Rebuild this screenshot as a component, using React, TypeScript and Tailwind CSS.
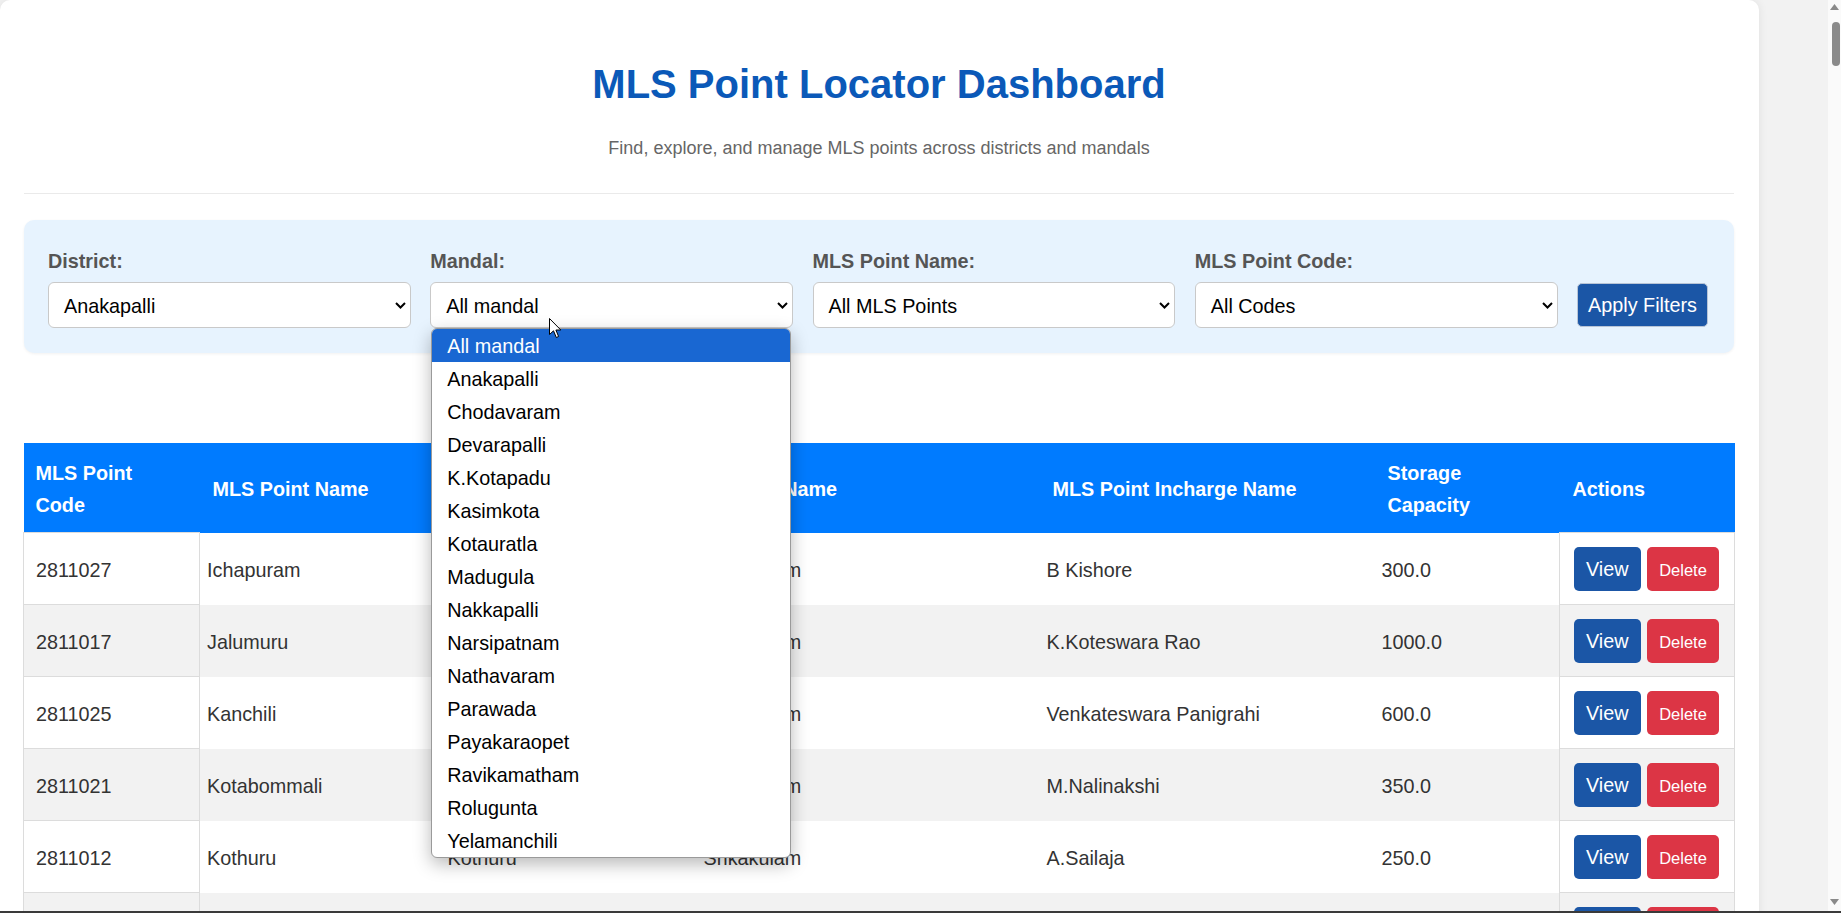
import React from "react";

const mandals = [
  "All mandal",
  "Anakapalli",
  "Chodavaram",
  "Devarapalli",
  "K.Kotapadu",
  "Kasimkota",
  "Kotauratla",
  "Madugula",
  "Nakkapalli",
  "Narsipatnam",
  "Nathavaram",
  "Parawada",
  "Payakaraopet",
  "Ravikamatham",
  "Rolugunta",
  "Yelamanchili",
];

const points = [
  { code: "2811027", name: "Ichapuram", mandal: "Ichapuram", district: "Srikakulam", incharge: "B Kishore", capacity: "300.0" },
  { code: "2811017", name: "Jalumuru", mandal: "Jalumuru", district: "Srikakulam", incharge: "K.Koteswara Rao", capacity: "1000.0" },
  { code: "2811025", name: "Kanchili", mandal: "Kanchili", district: "Srikakulam", incharge: "Venkateswara Panigrahi", capacity: "600.0" },
  { code: "2811021", name: "Kotabommali", mandal: "Kotabommali", district: "Srikakulam", incharge: "M.Nalinakshi", capacity: "350.0" },
  { code: "2811012", name: "Kothuru", mandal: "Kothuru", district: "Srikakulam", incharge: "A.Sailaja", capacity: "250.0" },
  { code: "2811019", name: "Mandasa", mandal: "Mandasa", district: "Srikakulam", incharge: "P.Ramesh", capacity: "400.0" },
];

function Chevron() {
  return (
    <svg width="11" height="7" viewBox="0 0 11 7" className="shrink-0">
      <polyline points="1,1 5.5,5.5 10,1" fill="none" stroke="#000" strokeWidth="2" />
    </svg>
  );
}

function SelectBox({ value }: { value: string }) {
  return (
    <div className="h-[46px] bg-white border border-[#c9c9c9] rounded-[6px] flex items-center justify-between pl-[15px] pr-[4px] text-[19.8px] text-black">
      <span className="pt-[3px]">{value}</span>
      <Chevron />
    </div>
  );
}

function Field({ label, value, children }: { label: string; value: string; children?: React.ReactNode }) {
  return (
    <div className="w-[363px] flex flex-col relative">
      <label className="text-[19.8px] leading-[24px] font-bold text-[#555]">{label}</label>
      <div className="mt-[9px] relative">
        <SelectBox value={value} />
        {children}
      </div>
    </div>
  );
}

export default function App() {
  return (
    <div className="relative h-screen w-full overflow-hidden flex flex-col bg-[#f2f2f2] font-['Liberation_Sans',Arial,sans-serif]">
      <div className="flex flex-1 min-h-0">
        <div className="flex-1 min-w-0 overflow-hidden">
          <div className="w-[1759px] bg-white rounded-[10px] shadow-[0_0_10px_rgba(0,0,0,0.08)] pl-[24px] pr-[25px] pt-[61px] pb-[40px]">
            {/* Header */}
            <h1 className="text-center text-[40px] leading-[46px] font-bold text-[#0b59b8]">MLS Point Locator Dashboard</h1>
            <p className="mt-[29px] text-center text-[18px] leading-[24px] text-[#666]">
              Find, explore, and manage MLS points across districts and mandals
            </p>
            <div className="mt-[33px] h-px bg-[#eaeaea]" />

            {/* Filters */}
            <div className="mt-[26px] rounded-[10px] bg-[#e7f3fe] shadow-[0_1px_3px_rgba(0,0,0,0.06)] pt-[29px] pb-[25px] pl-[24px] pr-[26px] flex items-end gap-[19.5px]">
              <Field label="District:" value="Anakapalli" />
              <Field label="Mandal:" value="All mandal">
                <div className="absolute z-20 top-[46px] left-[1px] w-[360px] bg-white border border-[#9a9a9a] rounded-[6px] overflow-hidden shadow-[0_6px_18px_rgba(0,0,0,0.28)]">
                  {mandals.map((m, i) => (
                    <div
                      key={m}
                      className={`h-[33px] pl-[15px] pt-[2px] flex items-center text-[19.8px] ${
                        i === 0 ? "bg-[#1967d2] text-white" : "text-black"
                      }`}
                    >
                      {m}
                    </div>
                  ))}
                </div>
              </Field>
              <Field label="MLS Point Name:" value="All MLS Points" />
              <Field label="MLS Point Code:" value="All Codes" />
              <button className="mb-[1px] h-[44px] w-[131px] pt-[2px] rounded-[5px] border border-[#b8c4d6] bg-[#1b56a6] text-white text-[19.8px]">
                Apply Filters
              </button>
            </div>

            {/* Table */}
            <table className="mt-[90px] -ml-[1px] w-[1711px] table-fixed border-collapse">
              <colgroup>
                <col className="w-[176px]" />
                <col className="w-[241px]" />
                <col className="w-[256px]" />
                <col className="w-[343px]" />
                <col className="w-[335px]" />
                <col className="w-[185px]" />
                <col className="w-[175px]" />
              </colgroup>
              <thead>
                <tr className="bg-[#007bff] text-white text-[19.8px] leading-[1.6] font-bold text-left">
                  <th className="px-[12px] pt-[15px] pb-[11px] align-middle">MLS Point<br />Code</th>
                  <th className="px-[13px] pt-[15px] pb-[11px] align-middle">MLS Point Name</th>
                  <th className="px-[13px] pt-[15px] pb-[11px] align-middle">Mandal Name</th>
                  <th className="px-[13px] pt-[15px] pb-[11px] align-middle">District Name</th>
                  <th className="px-[13px] pt-[15px] pb-[11px] align-middle">MLS Point Incharge Name</th>
                  <th className="px-[13px] pt-[15px] pb-[11px] align-middle">Storage<br />Capacity</th>
                  <th className="px-[13px] pt-[15px] pb-[11px] align-middle">Actions</th>
                </tr>
              </thead>
              <tbody>
                {points.map((p, i) => (
                  <tr key={p.code} className={`${i % 2 === 1 ? "bg-[#f2f2f2]" : "bg-white"} text-[19.8px] leading-[1.6] text-[#333]`}>
                    <td className="h-[72px] pl-[12px] pt-[3px] align-middle border border-[#dcdcdc]">{p.code}</td>
                    <td className="pl-[7px] pt-[3px] align-middle">{p.name}</td>
                    <td className="pl-[7px] pt-[3px] align-middle">{p.mandal}</td>
                    <td className="pl-[7px] pt-[3px] align-middle">{p.district}</td>
                    <td className="pl-[7px] pt-[3px] align-middle">{p.incharge}</td>
                    <td className="pl-[7px] pt-[3px] align-middle">{p.capacity}</td>
                    <td className="pl-[14px] align-middle border border-[#dcdcdc]">
                      <div className="flex items-center gap-[6.6px]">
                        <button className="h-[43.5px] px-[12px] pt-[2px] rounded-[5px] bg-[#1b56a6] text-white text-[19.8px]">View</button>
                        <button className="h-[43.5px] px-[12px] pt-[2px] rounded-[5px] bg-[#dc3545] text-white text-[16.5px]">Delete</button>
                      </div>
                    </td>
                  </tr>
                ))}
              </tbody>
            </table>
          </div>
        </div>

        {/* Scrollbar */}
        <div className="w-[13px] bg-[#fafafa] flex flex-col items-center justify-between py-[4px]">
          <div className="flex flex-col items-center w-full">
            <svg width="9" height="6" viewBox="0 0 9 6">
              <polygon points="4.5,0 9,6 0,6" fill="#8a8a8a" />
            </svg>
            <div className="mt-[12px] ml-[2px] w-[8px] h-[44px] rounded-full bg-[#8a8a8a]" />
          </div>
          <svg width="9" height="6" viewBox="0 0 9 6" className="mb-[2px]">
            <polygon points="0,0 9,0 4.5,6" fill="#8a8a8a" />
          </svg>
        </div>
      </div>
      <div className="h-[2px] bg-[#3a3a3a]" />

      {/* Mouse cursor */}
      <svg className="absolute left-[549px] top-[318px] z-30" width="13" height="21" viewBox="0 0 13 21">
        <path d="M0.5 0.5 L0.5 16.5 L4.5 12.8 L7.3 19.5 L9.6 18.5 L6.9 12 L11.8 12 Z" fill="#fff" stroke="#000" strokeWidth="1" strokeLinejoin="round" />
      </svg>
    </div>
  );
}
